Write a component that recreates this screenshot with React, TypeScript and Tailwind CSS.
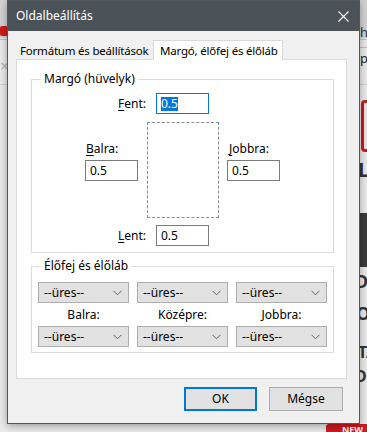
import React from "react";

function Chevron() {
  return (
    <svg width="9" height="6" viewBox="0 0 9 6" className="shrink-0">
      <path d="M0.5 0.8 L4.5 4.8 L8.5 0.8" fill="none" stroke="#5f5f5f" strokeWidth="1" />
    </svg>
  );
}

function Select() {
  return (
    <div className="h-[21px] bg-[#e1e1e1] border border-[#adadad] flex items-center justify-between pl-[5px] pr-[6px]">
      <span className="leading-none">--üres--</span>
      <Chevron />
    </div>
  );
}

function Input({ selected }: { selected?: boolean }) {
  return (
    <div
      className={
        "w-[53px] h-[21px] bg-white border flex items-center pl-[4px] " +
        (selected ? "border-[#0078d7]" : "border-[#7a7a7a]")
      }
    >
      {selected ? (
        <span className="bg-[#0078d7] text-white leading-[14px]">0.5</span>
      ) : (
        <span className="leading-[14px]">0.5</span>
      )}
    </div>
  );
}

function U({ c }: { c: string }) {
  return <span className="underline underline-offset-[2px] decoration-1">{c}</span>;
}

export default function App() {
  return (
    <div className="relative w-[367px] h-[432px] overflow-hidden bg-[#ebebeb] font-['Noto_Sans',sans-serif] text-[12px] text-black">
      {/* background page behind the dialog */}
      <div className="absolute left-0 top-0 w-[367px] h-[38px] bg-[#d2d2d2]" />
      <div className="absolute left-0 top-[26px] w-[8px] h-[10px] bg-[#d11a1a] rounded-[2px]" />
      <div className="absolute left-0 top-[39px] w-[367px] h-px bg-[#c4c4c4]" />
      <div className="absolute left-0 top-[84px] w-[367px] h-px bg-[#cfcfcf]" />
      <div className="absolute left-0 top-[58px] text-[16px] text-[#b5b5b5] leading-none">×</div>
      <div className="absolute left-[360px] top-[26px] text-[13px] text-[#333] leading-none">h</div>
      <div className="absolute left-[360px] top-[47px] w-[7px] h-px bg-[#bdbdbd]" />
      <div className="absolute left-[360px] top-[52px] text-[13px] text-[#222] leading-none">p</div>
      <div className="absolute left-[361px] top-[100px] w-[12px] h-[52px] border-[3px] border-[#d0191f] rounded-[4px] bg-[#e6e6e6]" />
      <div className="absolute left-[358px] top-[160px] text-[20px] text-[#333] leading-none font-bold">L</div>
      <div className="absolute left-[360px] top-[213px] w-[7px] h-[54px] bg-[#3b3b3b]" />
      <div className="absolute left-[355px] top-[272px] text-[18px] text-[#333] leading-none font-bold">D</div>
      <div className="absolute left-[356px] top-[304px] text-[18px] text-[#333] leading-none font-bold">O</div>
      <div className="absolute left-[358px] top-[344px] text-[16px] text-[#333] leading-none font-bold">TA</div>
      <div className="absolute left-[355px] top-[368px] text-[16px] text-[#333] leading-none font-bold">DI</div>
      <div className="absolute left-[326px] top-[424px] w-[50px] h-[12px] bg-[#d0191f] rounded-tl-[3px] text-white text-[9px] font-bold pl-[16px] leading-[12px]">NEW</div>

      {/* dialog window */}
      <div className="absolute left-[7px] top-0 w-[353px] h-[424px] bg-[#f0f0f0] border border-[#50585e] shadow-[0_2px_8px_rgba(0,0,0,0.35)] flex flex-col">
        <div className="h-[30px] bg-[#4b5358] flex items-center justify-between pl-[8px] pr-[10px] text-white text-[12px]">
          <span>Oldalbeállítás</span>
          <svg width="11" height="11" viewBox="0 0 11 11">
            <path d="M0.5 0.5 L10.5 10.5 M10.5 0.5 L0.5 10.5" stroke="#ffffff" strokeWidth="1.1" />
          </svg>
        </div>

        <div className="mt-[9px] ml-[8px] w-[331px] flex flex-col">
          {/* tabs */}
          <div className="flex items-end h-[19px] whitespace-nowrap text-[11.5px] tracking-[-0.2px]">
            <div className="-ml-px w-[138px] h-[16px] pl-[5px] flex items-center leading-none">
              Formátum és beállítások
            </div>
            <div className="relative z-10 -mb-px w-[130px] h-[20px] bg-white border border-b-0 border-[#d9d9d9] pl-[6px] flex items-center leading-none">
              Margó, élőfej és élőláb
            </div>
          </div>

          {/* panel */}
          <div className="h-[320px] bg-white border border-[#d9d9d9] flex flex-col pl-[14px]">
            {/* group 1 */}
            <div className="relative mt-[19px] w-[303px] border border-[#dcdcdc] pt-[13px] pb-[6px] pl-[53px]">
              <span className="absolute left-[9px] top-[-9px] bg-white px-[3px] leading-[16px]">Margó (hüvelyk)</span>
              <div className="flex items-center h-[21px]">
                <div className="w-[62px] pr-[1px] text-right">
                  <U c="F" />ent:
                </div>
                <div className="ml-[9px]">
                  <Input selected />
                </div>
              </div>
              <div className="mt-[8px] flex h-[96px]">
                <div className="w-[53px] pt-[19px] flex flex-col">
                  <div className="h-[16px] leading-[16px] pl-[1px]">
                    <U c="B" />alra:
                  </div>
                  <div className="mt-[3px]">
                    <Input />
                  </div>
                </div>
                <div className="ml-[9px] w-[72px] h-[96px] border border-dashed border-[#8a8a8a]" />
                <div className="ml-[8px] w-[53px] pt-[19px] flex flex-col">
                  <div className="h-[16px] leading-[16px] pl-[2px]">
                    <U c="J" />obbra:
                  </div>
                  <div className="mt-[3px]">
                    <Input />
                  </div>
                </div>
              </div>
              <div className="mt-[7px] flex items-center h-[21px]">
                <div className="w-[62px] pr-[1px] text-right">
                  <U c="L" />ent:
                </div>
                <div className="ml-[9px]">
                  <Input />
                </div>
              </div>
            </div>

            {/* group 2 */}
            <div className="relative mt-[13px] w-[303px] border border-[#dcdcdc] pt-[15px] pb-[5px] px-[6px]">
              <span className="absolute left-[9px] top-[-9px] bg-white px-[3px] leading-[16px]">Élőfej és élőláb</span>
              <div className="grid grid-cols-3 gap-x-[8px]">
                <Select />
                <Select />
                <Select />
              </div>
              <div className="grid grid-cols-3 gap-x-[8px] h-[23px] items-center text-center">
                <span>Balra:</span>
                <span>Középre:</span>
                <span>Jobbra:</span>
              </div>
              <div className="grid grid-cols-3 gap-x-[8px]">
                <Select />
                <Select />
                <Select />
              </div>
            </div>
          </div>

          {/* buttons */}
          <div className="mt-[8px] flex justify-end gap-[12px] pr-[4px]">
            <div className="w-[73px] h-[24px] bg-[#e1e1e1] border-2 border-[#0078d7] flex items-center justify-center">
              OK
            </div>
            <div className="w-[74px] h-[24px] bg-[#e1e1e1] border border-[#adadad] flex items-center justify-center">
              Mégse
            </div>
          </div>
        </div>
      </div>
    </div>
  );
}
